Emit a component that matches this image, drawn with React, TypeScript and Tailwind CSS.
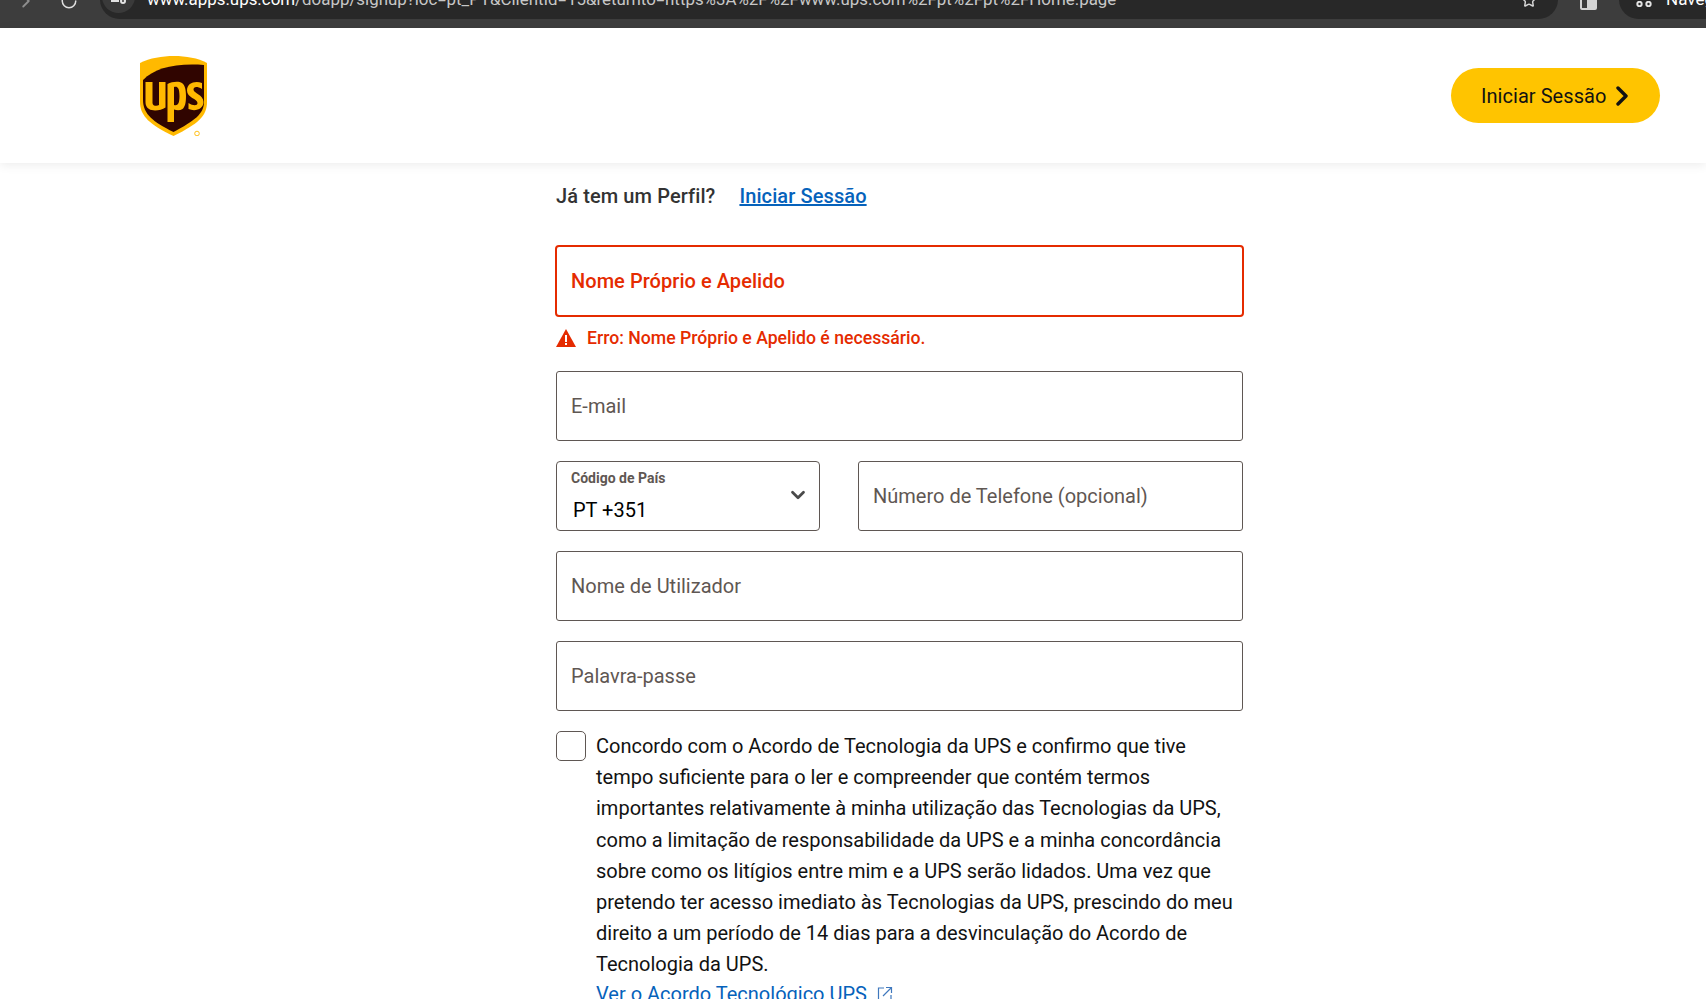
import React from "react";
import { ChevronDown, ChevronRight, RotateCw, Star } from "lucide-react";

function Logo() {
  return (
    <svg viewBox="0 0 68 80" className="w-[68px] h-[80px]">
      <path d="M0 7 C10 2 22 0 34 0 C46 0 58 2 67 7 L67 46 C67 60 58 68 33.500 80 C10 69 0 60 0 46 Z" fill="#ffb900" />
      <path d="M3 24 C15 12 35 7 64 9 L64 46 C64 58 54 65 33.500 76 C13 66 3 58 3 44 Z" fill="#300500" />
      <path d="M5.500 26 L12.500 26 L12.500 47 C12.500 50 17 50.500 19 49 L19 26 L25.500 26 L25.500 51.500 C21 54.500 13 55.500 9 53 C6.500 51.500 5.500 49 5.500 46 Z" fill="#ffb900" />
      <path d="M27.500 28 C32 25.500 39 25 42 27 C45 29 46 34 46 40 C46 47 45 51 42.500 53 C40 54.500 37 54.500 34 53.500 L34 66 L27.500 66 Z M34 31 L34 49 C37.500 50 39.500 48 39.500 40 C39.500 32 37.500 30 34 31 Z" fill="#ffb900" fillRule="evenodd" />
      <path d="M62 27 L62 33 C57 30 53.500 30.500 53.500 33.500 C53.500 37.500 63.500 38.500 63.500 46 C63.500 53 55.500 56 48.500 53 L48.500 47 C53 50 57.500 50 57.500 47 C57.500 42.500 47 42 47 34.500 C47 27 55 24.500 62 27 Z" fill="#ffb900" />
      <circle cx="57" cy="77.500" r="2.300" fill="none" stroke="#ffb900" strokeWidth="0.900" />
    </svg>
  );
}

function Field({ label, className }: { label: string; className?: string }) {
  return (
    <div className={`h-[70px] border border-[#5f5753] rounded-[3px] flex items-center px-[14px] text-[20px] text-[#5f5753] ${className ?? ""}`}>
      {label}
    </div>
  );
}

export default function App() {
  return (
    <div className="h-[999px] overflow-hidden bg-white font-['Roboto',sans-serif]">
      <div className="h-[28px] bg-[#3d3d3d] overflow-hidden">
        <div className="h-[48px] -mt-[20px] pb-[9px] flex text-[#e3e3e3]">
          <div className="w-[100px] shrink-0 flex items-center gap-[23px] pl-[15px] pt-[2px]">
            <ChevronRight size={22} className="text-[#8e8e8e]" />
            <RotateCw size={18} className="text-[#e0e0e0]" />
          </div>
          <div className="w-[1458px] shrink-0 bg-[#282828] rounded-[20px] flex items-center pl-[2px] pr-[21px] text-[16.900px]">
            <div className="w-[33px] h-[33px] rounded-full bg-[#3a3a3a] -mt-[6px] shrink-0 flex items-center justify-center">
              <svg viewBox="0 0 16 16" className="w-[16px] h-[16px] mt-[-2px]" fill="none" stroke="#e3e3e3" strokeWidth="2">
                <path d="M0 13 H8" />
                <circle cx="12" cy="13" r="2" />
              </svg>
            </div>
            <span className="ml-[12px] whitespace-nowrap">
              <span className="text-white">www.apps.ups.com</span>
              <span className="text-[#c7c7c7]">/doapp/signup?loc=pt_PT&amp;ClientId=15&amp;returnto=https%3A%2F%2Fwww.ups.com%2Fpt%2Fpt%2FHome.page</span>
            </span>
            <Star size={16} strokeWidth={2.2} className="ml-auto text-[#d5d5d5] mt-[1px]" />
          </div>
          <div className="w-[61px] shrink-0 flex items-center justify-center pt-[2px]">
            <div className="w-[17px] h-[18px] border-2 border-[#d5d5d5] rounded-[2px] bg-[#3d3d3d] flex justify-end">
              <div className="w-[8px] h-full bg-[#d5d5d5]" />
            </div>
          </div>
          <div className="flex-1 min-w-0 overflow-hidden bg-[#282828] rounded-l-[20px] flex items-center pl-[17px] gap-[14px] text-[17px] text-white whitespace-nowrap">
            <svg viewBox="0 0 16 6" className="w-[16px] h-[6px] mt-[8px] shrink-0" fill="none" stroke="#e3e3e3" strokeWidth="2">
              <circle cx="3.500" cy="3" r="2.200" />
              <circle cx="12.500" cy="3" r="2.200" />
            </svg>
            <span>Navegação anónima</span>
          </div>
        </div>
      </div>
      <header className="h-[135px] bg-white shadow-[0_2px_10px_rgba(0,0,0,0.08)] flex items-center justify-between pl-[140px] pr-[46px]">
        <Logo />
        <button className="h-[55px] w-[209px] rounded-full bg-[#ffc400] flex items-center pl-[30px] text-[20px] text-[#121212] tracking-[0.05px] gap-[9px]">
          Iniciar Sessão
          <svg viewBox="0 0 14 20" className="w-[14px] h-[20px]" fill="none" stroke="#121212" strokeWidth="3.400" strokeLinecap="round" strokeLinejoin="round">
            <path d="M3 2 L11 10 L3 18" />
          </svg>
        </button>
      </header>
      <main className="w-[687px] ml-[556px] pt-[20px]">
        <div className="h-[26px] flex items-center text-[20px] font-medium text-[#333] tracking-[0.1px] gap-[24px]">
          <span>Já tem um Perfil?</span>
          <a className="text-[#0662bb] underline">Iniciar Sessão</a>
        </div>
        <div className="mt-[36px] -mx-px h-[72px] border-2 border-[#e52b00] rounded-[4px] flex items-center px-[14px] text-[20px] font-medium tracking-[0.05px] text-[#e52b00]">
          Nome Próprio e Apelido
        </div>
        <div className="h-[54px] pb-[12px] flex items-center text-[17.650px] font-medium text-[#e52b00] gap-[11px]">
          <svg viewBox="0 0 20 18" className="w-[20px] h-[18px]">
            <path d="M10 0 L20 18 L0 18 Z" fill="#e52b00" />
            <rect x="9" y="6" width="2" height="7" fill="#fff" />
            <rect x="9" y="14" width="2" height="2" fill="#fff" />
          </svg>
          Erro: Nome Próprio e Apelido é necessário.
        </div>
        <div className="flex flex-col gap-[20px]">
          <Field label="E-mail" />
          <div className="flex gap-[38px]">
            <div className="w-[264px] h-[70px] border border-[#5f5753] rounded-[4px] pl-[14px] relative">
              <div className="text-[14px] font-bold text-[#5f5753] mt-[7px] leading-[18px]">Código de País</div>
              <div className="text-[20px] text-black pl-[2px] mt-[10px] leading-[26px]">PT +351</div>
              <ChevronDown size={22} strokeWidth={3} className="absolute right-[10px] top-[22px] text-[#4a4a4a]" />
            </div>
            <Field label="Número de Telefone (opcional)" className="flex-1" />
          </div>
          <Field label="Nome de Utilizador" />
          <Field label="Palavra-passe" />
        </div>
        <div className="flex gap-[10px] mt-[20px]">
          <div className="w-[30px] h-[30px] shrink-0 border border-[#5f5753] rounded-[5px]" />
          <div className="text-[20px] leading-[31.200px] text-[#121212]">
            <div className="w-[640px]">Concordo com o Acordo de Tecnologia da UPS e confirmo que tive tempo suficiente para o ler e compreender que contém termos importantes relativamente à minha utilização das Tecnologias da UPS, como a limitação de responsabilidade da UPS e a minha concordância sobre como os litígios entre mim e a UPS serão lidados. Uma vez que pretendo ter acesso imediato às Tecnologias da UPS, prescindo do meu direito a um período de 14 dias para a desvinculação do Acordo de Tecnologia da UPS.</div>
            <a className="text-[#0662bb] flex items-center gap-[10px] leading-[26px]">
              Ver o Acordo Tecnológico UPS
              <svg viewBox="0 0 16 16" className="w-[16px] h-[16px]" fill="none" stroke="#3f78bd" strokeWidth="1.200">
                <path d="M7 2 H1.500 V14.500 H14 V9" />
                <path d="M6 10 L14.500 1.500 M9 1.500 H14.500 V7" />
              </svg>
            </a>
          </div>
        </div>
      </main>
    </div>
  );
}
